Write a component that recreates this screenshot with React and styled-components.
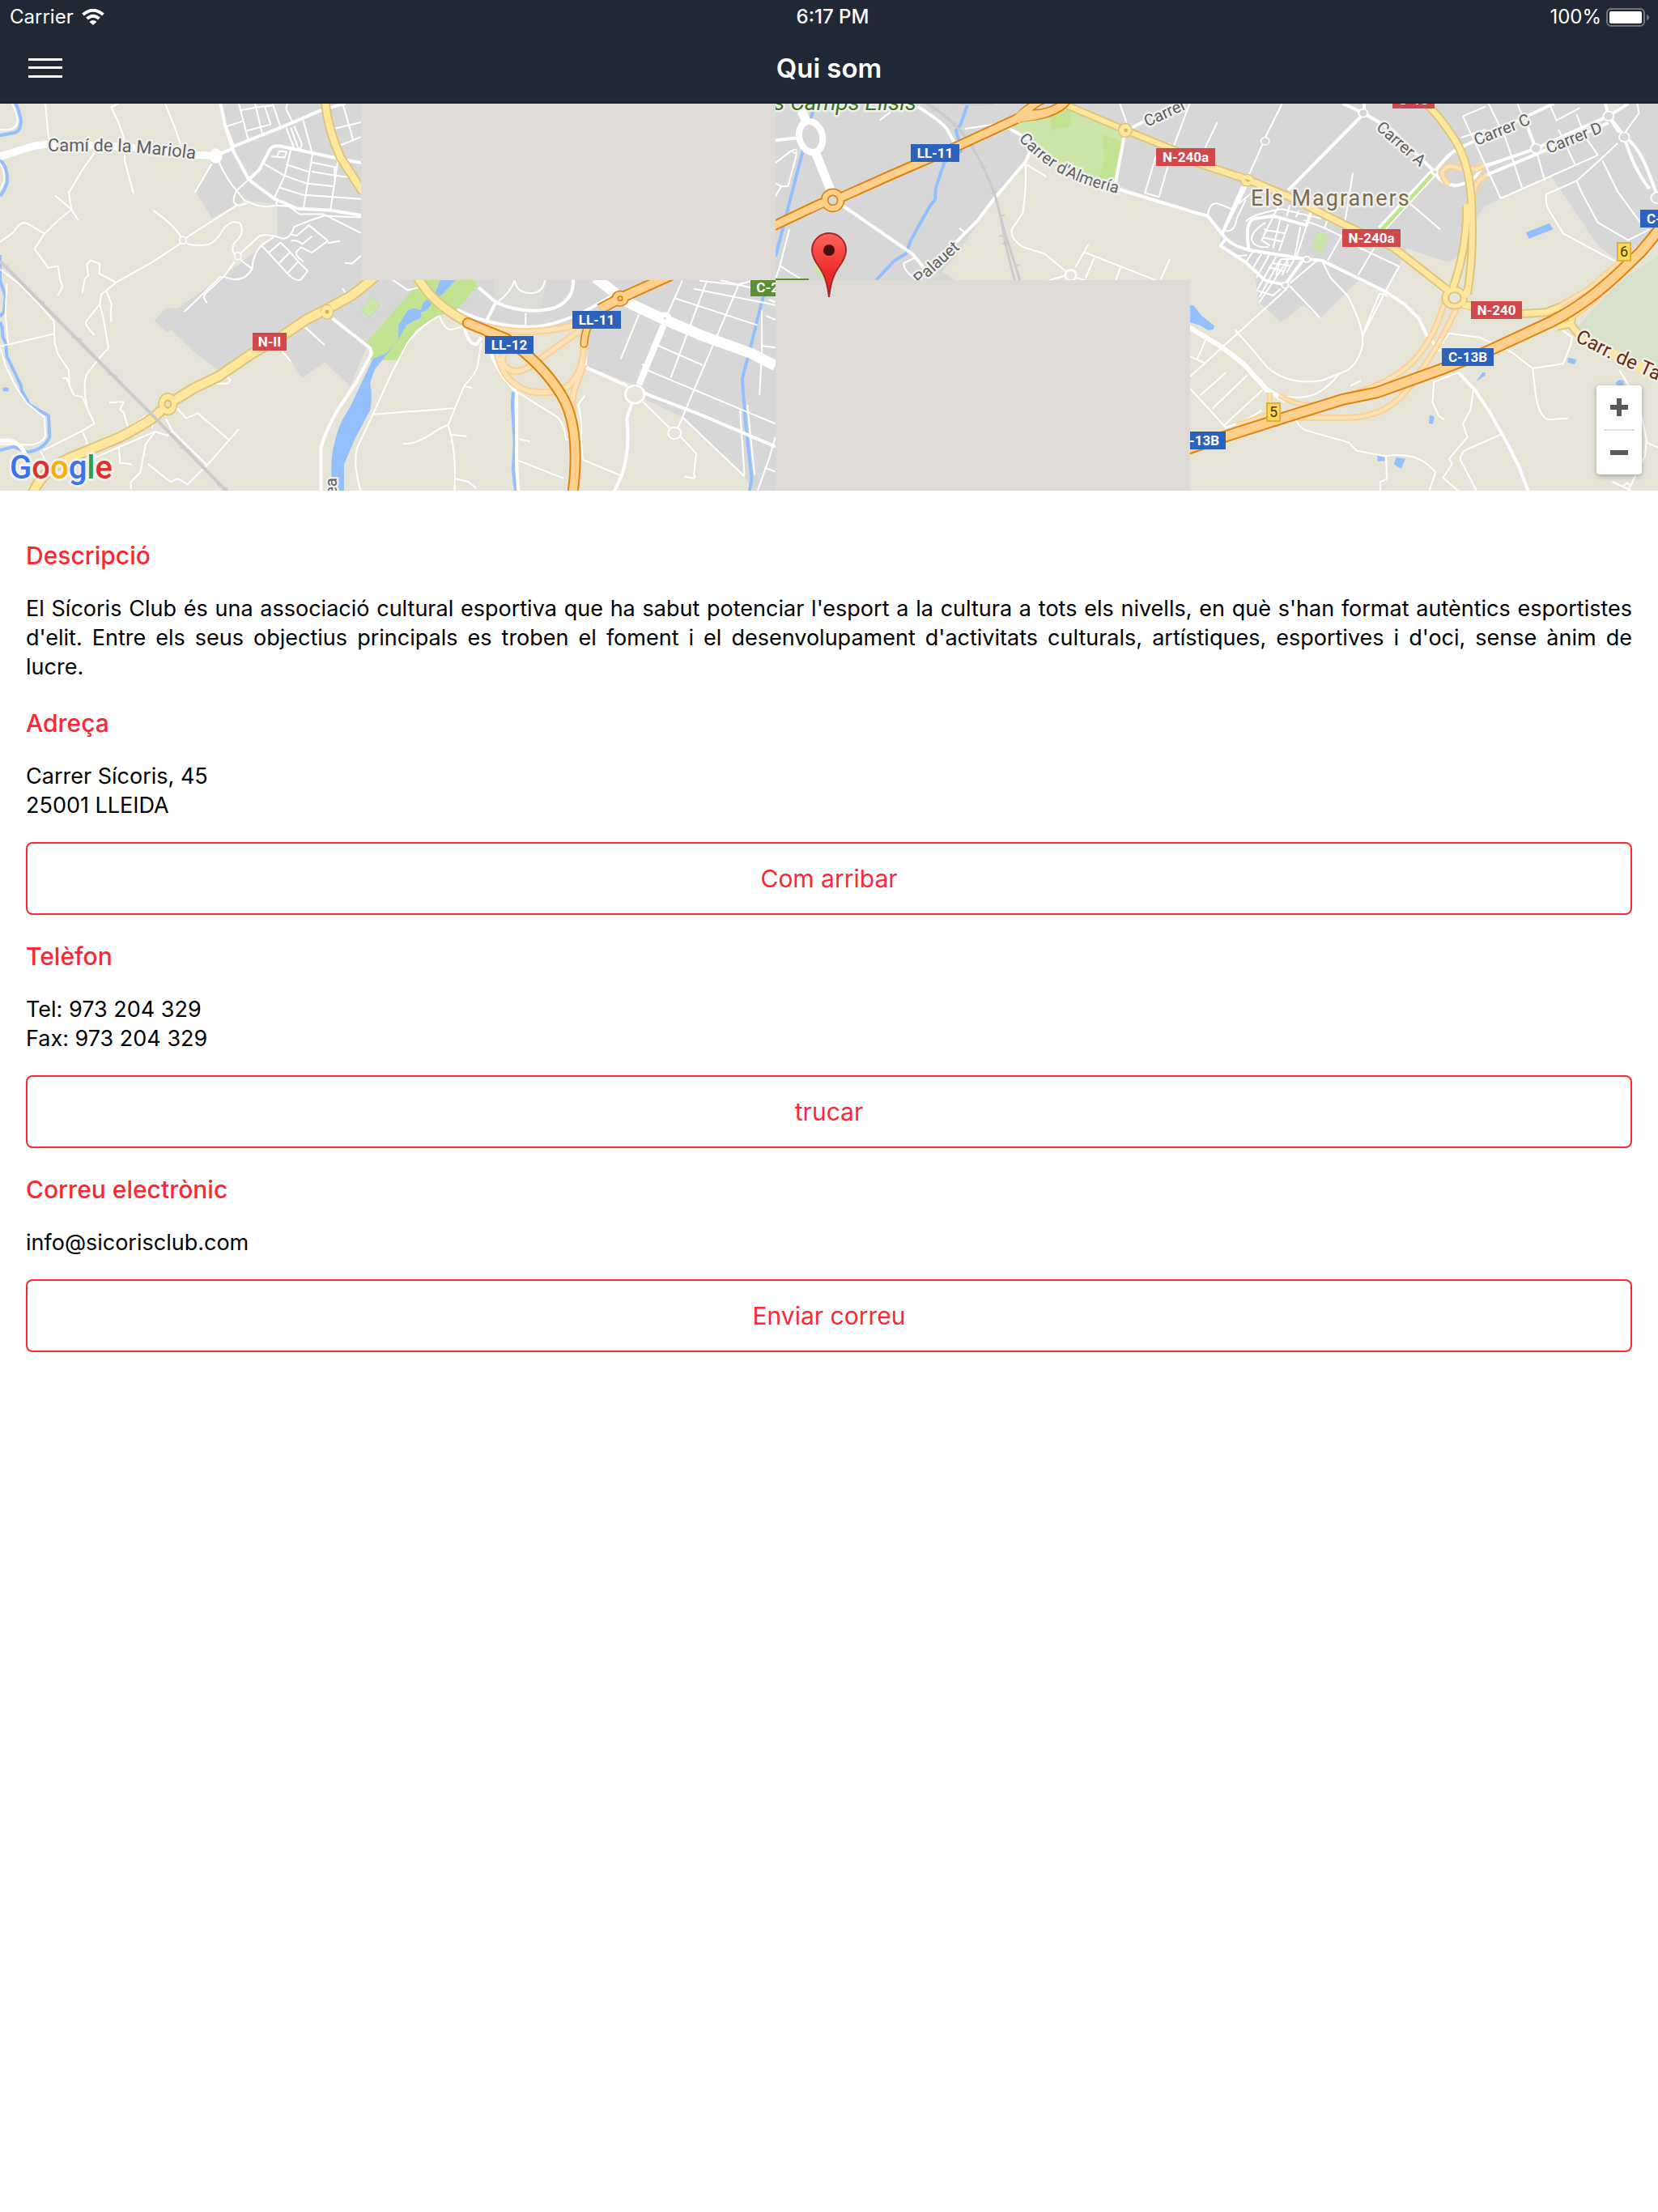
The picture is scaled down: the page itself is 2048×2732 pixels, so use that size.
import React from 'react'
import styled, { createGlobalStyle } from 'styled-components'

const GlobalStyle = createGlobalStyle`
  * {
    box-sizing: border-box;
  }
  body {
    margin: 0;
    background: #ffffff;
    color: #000000;
    font-family: Inter, "Liberation Sans", sans-serif;
  }`

const Header = styled.header`
  background-color: #1f2935;
  border-bottom: 2px solid #19212d;
  color: #ffffff;`

const StatusBar = styled.div`
  display: grid;
  grid-template-columns: 1fr auto 1fr;
  align-items: center;
  height: 42px;
  padding: 0 11px 0 12px;
  font-size: 24px;
  line-height: 40px;`

const StatusLeft = styled.div`
  display: flex;
  align-items: center;
  gap: 10px;`

const StatusTime = styled.div`
  padding-left: 8px;
  font-weight: 500;`

const StatusRight = styled.div`
  display: flex;
  align-items: center;
  justify-content: flex-end;
  gap: 6px;`

const NavBar = styled.div`
  display: grid;
  grid-template-columns: 1fr auto 1fr;
  align-items: center;
  height: 84px;
  padding: 0 32px;`

const MenuButton = styled.button`
  display: flex;
  justify-self: start;
  padding: 3px;
  border: 0;
  background: none;
  color: #ffffff;
  cursor: pointer;`

const Title = styled.h1`
  margin: 0;
  font-size: 33px;
  font-weight: 600;
  line-height: 40px;`

const MapBox = styled.section`
  position: relative;
  height: 478px;
  overflow: hidden;
  background-color: #dedbd6;`

const MapSvg = styled.svg`
  display: block;
  width: 100%;
  height: 100%;
  font-family: Roboto, "Liberation Sans", sans-serif;`

const ZoomControl = styled.div`
  position: absolute;
  right: 20px;
  bottom: 20px;
  display: flex;
  flex-direction: column;
  align-items: center;
  width: 56px;
  background-color: #ffffff;
  border-radius: 4px;
  box-shadow: 0 2px 6px rgba(0, 0, 0, 0.3);`

const ZoomButton = styled.button`
  display: flex;
  align-items: center;
  justify-content: center;
  width: 56px;
  height: 54px;
  padding: 0;
  border: 0;
  background: none;
  cursor: pointer;`

const ZoomDivider = styled.div`
  width: 38px;
  height: 2px;
  background-color: #e0e0e0;`

const Content = styled.main`
  padding: 62px 32px;`

const Section = styled.section`
  margin-bottom: 33px;`

const Heading = styled.h2`
  margin: 0 0 30px;
  color: #fc2733;
  font-size: 30px;
  font-weight: 500;
  line-height: 36px;`

const Text = styled.p`
  margin: 0;
  font-size: 27px;
  line-height: 36px;
  text-align: justify;`

const FullLines = styled.span`
  display: block;
  text-align-last: justify;`

const ActionButton = styled.button`
  display: block;
  width: 100%;
  height: 90px;
  margin-top: 27px;
  border: 2px solid #fc2733;
  border-radius: 8px;
  background-color: #ffffff;
  color: #fc2733;
  font-family: inherit;
  font-size: 30px;
  cursor: pointer;`

const Street = styled.path`
  fill: none;
  stroke: #ffffff;
  stroke-width: ${(p) => p.$w || 2}px;
  stroke-linejoin: round;
  vector-effect: non-scaling-stroke;`

const Line = styled.path`
  fill: none;
  stroke: ${(p) => p.$color};
  stroke-width: ${(p) => p.$w}px;
  stroke-linejoin: round;
  stroke-linecap: ${(p) => p.$cap || 'butt'};
  vector-effect: non-scaling-stroke;`

const MapLabel = styled.text`
  fill: ${(p) => p.$color || '#5f5f5f'};
  font-size: ${(p) => p.$size || 20}px;
  font-style: ${(p) => (p.$italic ? 'italic' : 'normal')};
  letter-spacing: ${(p) => (p.$tracked ? '2px' : 'normal')};
  stroke: #efefee;
  stroke-width: 5px;
  stroke-linejoin: round;
  paint-order: stroke;`

const ShieldText = styled.text`
  fill: #ffffff;
  font-size: 17px;
  font-weight: 700;
  text-anchor: middle;`

const ExitText = styled.text`
  fill: #4a3a10;
  font-size: 18px;
  text-anchor: middle;`

const Logo = styled.text`
  font-size: 40px;
  font-weight: 500;
  stroke: #f3f1ea;
  stroke-width: 6px;
  stroke-linejoin: round;
  paint-order: stroke;`

const URBAN = '#d7d7d7'
const LAND = '#e6e3d7'
const WATER = '#93bfff'
const PARK = '#c2e492'
const PITCH = '#cce6aa'
const RAIL = '#cbcbcb'

const ROADS = {
  yellow: { fill: '#ffe79d', casing: '#dfc57c' },
  orange: { fill: '#ffd08b', casing: '#dd850f' },
  ramp: { fill: '#fbe2b8', casing: '#fdd090' }
}

const SHIELDS = {
  red: '#d0484c',
  blue: '#2c62bb',
  green: '#5b9032'
}

function Streets({ paths, w }) {
  return paths.map((d) => <Street key={d} d={d} $w={w} />)
}

function Road({ d, w, kind }) {
  return (
    <>
      <Line d={d} $w={w + 3} $color={ROADS[kind].casing} />
      <Line d={d} $w={w - 1} $color={ROADS[kind].fill} />
    </>
  )
}

function Shield({ x, y, w, color, children }) {
  return (
    <g>
      <rect x={x} y={y} width={w} height="22" fill={SHIELDS[color]} />
      <ShieldText x={x + w / 2} y={y + 17}>{children}</ShieldText>
    </g>
  )
}

function Exit({ x, y, children }) {
  return (
    <g>
      <rect x={x + 1} y={y + 1} width="16" height="22" fill="#fdd853" stroke="#dcb03a" strokeWidth="2" />
      <ExitText x={x + 9} y={y + 18}>{children}</ExitText>
    </g>
  )
}

// West side: Mariola and the N-II
function WestTile() {
  return (
    <g transform="scale(0.3333 0.389)">
      <path fill={URBAN} d="M815 328 860 465 800 490 725 610 785 693 880 650 905 635 1027 650 1029 747 945 800 830 875 660 978 615 978 572 1018 617 1055 632 1045 735 1130 810 1175 930 1110 1050 1110 1119 1200 1204 1150 1298 1226 1355 1110 1600 890V328Z" />
      <path fill={PITCH} stroke="#c2e3a6" strokeWidth="6" d="M1340 984 1377 946 1406 971 1368 1008Z" />
      <Line $color={WATER} $w={4} d="M58 328Q75 360 78 385Q75 420 50 422L0 430M0 508Q30 530 26 580Q15 610 0 622M0 810V890L20 940 15 990 0 1005M0 1022 8 1040 10 1070 22 1090 25 1130 78 1225 80 1240 110 1285 180 1320 184 1388Q160 1430 100 1435L50 1418 0 1430" />
      <path fill={WATER} d="M10 1233 20 1229 33 1233 30 1243 12 1242Z" />
      <Streets
        paths={[
          'M45 328Q65 365 65 385Q60 410 30 412H0',
          'M0 520Q20 545 15 575L0 605',
          'M168 328 180 440',
          'M412 340 440 328M412 340 440 390 460 440 462 510 495 615',
          'M612 328 650 410 672 465',
          'M350 485 305 540 255 612 265 665 215 700 165 742 128 790 178 850 215 845 222 885 232 910 215 938',
          'M203 620 265 665 290 700',
          'M0 768 50 738Q75 700 100 709L165 742',
          'M305 930 315 885 327 875 322 840 335 826 370 838 367 868 430 897 565 832 670 772',
          'M430 897 375 935 370 965 320 1020Q310 1030 350 1063M370 965 385 1020 402 1105 365 1140 320 1190Q305 1230 325 1300L350 1345 300 1370 160 1430',
          'M395 925 413 965 410 1000 413 1022',
          'M0 855 70 900 150 970 200 1020 203 1090 215 1125 255 1175 258 1225 275 1255 305 1260 325 1300M232 1200 248 1202 258 1225',
          'M25 900 20 1000 30 1095M0 1100 100 1080 200 1060M0 1100 20 1160 60 1230 100 1280 165 1325 168 1385Q150 1415 90 1412L0 1410',
          'M568 668Q640 710 672 752M690 755 880 650',
          'M692 772Q705 782 770 777Q800 770 830 725Q860 695 890 710Q910 740 870 770Q850 800 880 812',
          'M890 805 960 750Q990 740 1050 758Q1080 755 1090 720L1150 700 1200 685 1338 690',
          'M683 990 815 880 830 878 870 830M767 962 755 945 758 935 830 878Q900 905 935 853L890 825M935 853Q935 810 970 778L1015 752',
          'M722 612 785 520M812 515Q840 570 877 605L922 570M877 605Q850 650 890 652L915 645M877 605 905 635Q970 665 1020 652',
          'M405 1278 458 1276 445 1300 458 1310 475 1358M440 1420 445 1470 483 1473 488 1478',
          'M800 1218 845 1218 852 1208 840 1190M565 1360V1335M475 1360 540 1320',
          'M655 1295 690 1328 733 1312 848 1396M885 1362 770 1475 695 1538 660 1520 632 1530 548 1473M615 1330 640 1370 765 1475M640 1370 620 1383 575 1370 540 1410 520 1500 485 1530V1552',
          'M575 1370 440 1420 200 1510M150 1432 170 1465M305 1370 322 1400V1415L220 1460',
          'M1120 1030 1203 1096M1040 1110 1077 1147M1270 915 1281 932M480 1360 520 1340',
          'M838 402 898 385M890 350 958 340 1010 335M885 328 920 445M945 328 972 425M982 340 1003 395 915 415M1010 328 1040 405M1060 345 1085 390M1060 345 1065 330',
          'M1123 380 1158 490M1060 405 1090 470M1078 405 1105 470Q1118 475 1118 455L1090 400M1240 408 1338 388M1270 328 1308 442M1258 462 1338 435',
          'M1005 497 1055 500 1062 482 1035 480 1025 500M975 518 1055 558 1135 582 1240 592M1060 522 1150 547M1078 475 1055 558 1015 630M1158 490 1125 660M1252 512 1225 665M1152 515 1250 532M1155 545 1250 558 1315 565M1240 532 1240 570M1035 595 1120 618 1338 632',
          'M1025 635V652L1070 655 1110 680 1200 680 1338 740M1080 745 1100 748 1145 715 1215 765 1155 802 1115 785 1098 800Q1095 815 1125 830M1078 765Q1100 760 1120 775L1157 750M1215 772 1260 765',
          'M970 780 1065 868 1105 830M995 803 1040 770 1075 800 1032 838M1105 830 1140 860 1115 888Q1095 895 1065 868M1075 800 1105 830M1278 835 1305 837 1338 812'
        ]}
      />
      <Streets
        w={4}
        paths={[
          'M817 328 835 400 865 465 1040 405 1190 350 1280 328M835 400 865 480 922 570 1015 630 1100 662 1230 668 1338 684',
          'M922 570 960 540 1000 475Q1010 460 1040 464L1100 475 1250 503 1338 517M800 495 865 470'
        ]}
      />
      <Street $w={9} d="M0 497 120 465Q150 458 190 458L450 465 600 478 730 492 800 495" />
      <circle cx="800" cy="495" r="24" fill="#ffffff" />
      <circle cx="678" cy="763" r="12" fill={LAND} stroke="#ffffff" strokeWidth="5" />
      <circle cx="881" cy="813" r="12" fill={LAND} stroke="#ffffff" strokeWidth="5" />
      <Street $w={5} d="M0 1400Q70 1390 95 1445" />
      <Road kind="yellow" w={9} d="M1205 322Q1215 410 1262 500L1345 610" />
      <Road kind="yellow" w={11} d="M120 1570Q150 1500 250 1457L440 1390Q520 1355 570 1325L620 1285 720 1232 810 1195 930 1125 1040 1070 1140 1012 1215 980 1300 940Q1350 910 1400 870" />
      <circle cx="622" cy="1283" r="34" fill="#ffe79d" stroke="#dfc57c" strokeWidth="5" />
      <circle cx="622" cy="1283" r="12" fill="#eadfae" stroke="#dfb964" strokeWidth="5" />
      <circle cx="1212" cy="990" r="23" fill="#ffe79d" stroke="#dfc57c" strokeWidth="4" />
      <circle cx="1212" cy="990" r="7" fill="#d9b45d" />
      <Line $color="#ffe79d" $w={8} d="M560 1331 600 1302M648 1270 720 1232M1150 1007 1190 991M1228 975 1290 945" />
      <Line $color={RAIL} $w={4} d="M0 828 145 955 410 1185 550 1305 680 1420 840 1560" />
      <Line $color={RAIL} $w={2} d="M12 850 30 842M135 950 165 962M265 1070 302 1078M400 1188 435 1195M538 1303 565 1308M668 1420 702 1432M805 1538 845 1552" />
    </g>
  )
}

// River, LL-12 interchange and the streets to the east of it
function RiverTile() {
  return (
    <g transform="translate(400 340) scale(0.3571 0.3333)">
      <path fill={URBAN} d="M520 0H1570V800H1485L1455 745 1240 525 1110 460 1070 405 905 335 900 260 860 190 570 195 460 130Z" />
      <path fill="#dcddd6" d="M590 0H780L745 130Q650 140 590 100Z" />
      <path fill={PARK} d="M310 50 350 10H525L530 40 460 130 400 150 320 200 262 314H160L165 270 150 245Z" />
      <path fill={WATER} d="M410 0H470L420 60 370 110Q350 140 335 135Q345 160 320 165L285 185 260 235 220 290 175 350 160 400Q170 450 160 500L110 600 70 700V800H30Q20 690 35 630Q50 550 90 490L130 400 170 310 215 290 258 240V185L290 130Q310 115 335 130L345 100 383 70Z" />
      <Line $color={WATER} $w={4} d="M655 432 652 480 660 620 655 720 664 800M1522 70Q1500 160 1480 250L1447 385 1460 560 1480 750 1473 800" />
      <Streets
        paths={[
          'M215 0 290 55 350 40M400 150Q420 210 445 200L480 190M400 150Q330 190 290 250L240 350 170 515 115 640Q100 700 128 800',
          'M170 515 452 493M485 410 513 418M545 250 533 330Q530 360 485 410L430 555Q460 650 452 800M430 555Q400 565 370 590Q320 625 273 625M435 590 495 596M452 753 500 765 527 790',
          'M665 430Q740 480 800 520Q830 540 838 608H890M675 607 713 616M670 685 828 752M903 445 880 480Q895 540 890 600L895 683 1030 743',
          'M1105 470 1200 570M1232 595 1288 660 1280 740Q1295 760 1247 745',
          'M1090 145 1027 310M1155 260 1310 333M1115 350 1562 550M1230 190 1562 320M1215 85 1500 185M1280 50 1562 110M1370 17 1562 70M1435 35 1225 565M1240 20 1190 140M1325 20 1200 380M1300 20 1430 35 1480 20M1100 330 1110 335',
          'M1515 130V290L1507 443M1562 100 1540 90M1530 150 1562 165M1518 262 1562 268M1525 712 1562 728M1500 800 1540 680 1562 600M1440 500 1455 740M1240 525 1455 745M1465 480 1490 740',
          'M660 17Q650 60 600 100M698 140V190M660 17Q665 65 715 66Q760 65 765 17'
        ]}
      />
      <Streets
        w={4}
        paths={[
          'M535 45 595 100 560 175M595 100Q700 150 800 120Q865 90 863 17M460 128Q600 200 740 190Q850 175 990 80M485 190Q500 260 530 255L545 230M665 430Q600 360 575 280',
          'M667 430V620Q665 700 673 800M905 260V340L1050 410M1065 475 1048 530Q1060 650 1030 743L1005 800M1110 438 1300 515 1562 635M-10 800V640Q10 560 60 480L110 400 165 290 160 270 30 160'
        ]}
      />
      <Street $w={13} d="M940 10 1050 100 1180 165 1300 220 1480 290 1562 335" />
      <Street $w={8} d="M1175 185 1090 405" />
      <circle cx="1180" cy="160" r="14" fill="#d7d7d7" stroke="#ffffff" strokeWidth="20" />
      <circle cx="1076" cy="441" r="33" fill={LAND} stroke="#ffffff" strokeWidth="8" />
      <circle cx="1213" cy="585" r="22" fill={LAND} stroke="#ffffff" strokeWidth="6" />
      <Road kind="ramp" w={6} d="M560 190Q700 230 870 185M885 205 735 320Q670 380 630 340Q605 310 630 280M600 290Q620 400 710 430Q830 450 870 380Q900 330 898 260M898 330 865 430Q855 470 862 510" />
      <Road kind="yellow" w={10} d="M315 -10Q350 60 400 105T500 175" />
      <Line $color={ROADS.orange.casing} $w={14} $cap="round" d="M498 177 630 235Q750 320 820 440" />
      <Road kind="orange" w={11} d="M560 205 630 235Q750 320 820 440T862 800" />
      <Line $color={ROADS.orange.casing} $w={10} $cap="round" d="M900 254Q903 200 925 170" />
      <Line $color={ROADS.orange.fill} $w={7} $cap="round" d="M900 254Q903 200 925 170" />
      <Line $color={ROADS.orange.fill} $w={10} $cap="round" d="M498 177 630 235" />
      <Road kind="orange" w={11} d="M955 125 1025 85 1200 0" />
      <circle cx="1025" cy="86" r="28" fill="#ffd08b" stroke="#dd850f" strokeWidth="5" />
      <Line $color={ROADS.orange.fill} $w={10} d="M970 117 1020 88 1090 53" />
      <circle cx="1025" cy="86" r="8" fill="#e6c48a" stroke="#dd850f" strokeWidth="5" />
    </g>
  )
}

// Camps Elisis and Carrer d'Almeria
function CentreTile() {
  return (
    <g transform="translate(950 120) scale(0.3333)">
      <path fill={URBAN} d="M0 0H1570V700H0Z" />
      <path fill={LAND} d="M968 200 1285 325 1570 425V700H720L640 645 690 590 835 375 950 250Z" />
      <path fill={PITCH} d="M900 110 1080 30 1320 130 1285 325 1120 290 960 150Z" />
      <path fill={PARK} d="M1040 60 1110 45 1125 105 1048 122ZM1237 138 1315 165 1283 318 1222 298 1242 235Z" />
      <path fill={PITCH} d="M163 640 185 622 235 690H215Z" />
      <Line $color={WATER} $w={4} d="M170 20 125 200 65 430 24 590M738 20 710 100 693 125 700 150 712 200 650 240 618 335 615 380 595 405 525 530 508 580 465 605 395 680" />
      <Streets
        paths={[
          'M22 245 80 200Q105 190 100 220L70 330 45 330 25 320M45 330 22 370M75 490 40 625 25 670M40 625 115 672',
          'M410 85 450 55M725 118 840 100M705 485 728 505M540 595 500 615Q495 635 530 665',
          'M950 250Q955 330 940 430L900 490Q890 520 940 555L1020 580 1100 645M955 250 1028 295',
          'M1135 630 1183 547M1165 573 1450 685M1205 595 1173 670M1302 632 1285 678M1485 600 1452 675M1035 680 1100 660M1140 670 1210 690',
          'M1300 24 1325 95M1435 215 1393 355 1445 370 1500 180 1560 20M1480 170 1510 190'
        ]}
      />
      <Streets w={4} paths={['M550 35Q640 90 660 120L685 165M270 400 530 580 600 665M970 195 950 240 835 375 770 460 660 570M880 110 960 155M1315 150 1283 320M1290 340 1570 425M1340 115 1400 85M22 160 110 150']} />
      <Street $w={11} d="M120 50 140 95M172 205 230 350" />
      <ellipse cx="155" cy="147" rx="43" ry="58" fill={URBAN} stroke="#ffffff" strokeWidth="24" transform="rotate(-15 155 147)" />
      <circle cx="1118" cy="660" r="20" fill={LAND} stroke="#ffffff" strokeWidth="8" />
      <circle cx="95" cy="200" r="7" fill={URBAN} stroke="#ffffff" strokeWidth="4" />
      <Road kind="yellow" w={7} d="M1080 20 1320 122 1500 195 1660 265" />
      <circle cx="1320" cy="123" r="25" fill="#ffe79d" stroke="#dfc57c" strokeWidth="5" />
      <circle cx="1322" cy="123" r="7" fill="#d9b45d" />
      <Line $color={RAIL} $w={3} d="M560 10Q690 80 750 180Q800 260 838 365L870 490 930 680M860 450 875 540 910 680" />
      <Line $color={RAIL} $w={2} d="M680 20Q760 35 830 24M605 52 625 40M680 105 697 95M742 185 762 178M788 262 808 258M825 358 842 352M855 440 873 438M852 515 872 513M865 543 885 541M908 625 928 622" />
      <Road kind="orange" w={10} d="M0 485 190 395 270 370 460 285 680 190 940 70 1060 20" />
      <path fill="none" stroke="#dd850f" strokeWidth="44" d="M930 80Q960 40 1020 15M950 68Q1060 60 1100 10" />
      <path fill="none" stroke="#ffd08b" strokeWidth="33" d="M915 87Q960 40 1020 15M930 75Q1060 60 1100 10" />
      <path fill={URBAN} stroke="#dd850f" strokeWidth="5" d="M980 47Q1005 25 1050 12L1075 18Q1030 48 980 47Z" />
      <circle cx="236" cy="382" r="42" fill="#ffd08b" stroke="#dd850f" strokeWidth="5" />
      <Line $color={ROADS.orange.fill} $w={9} d="M150 415 205 390M265 372 330 343" />
      <circle cx="236" cy="382" r="18" fill={URBAN} stroke="#dd850f" strokeWidth="5" />
    </g>
  )
}

// Els Magraners and the C-13B
function EastTile() {
  return (
    <g transform="translate(1460 120) scale(0.375 0.3333)">
      <path fill={URBAN} d="M20 0H1570V1470H20Z" />
      <path fill={LAND} d="M20 420 85 440 130 510 125 550 235 630 255 760 325 833 400 770 455 818 580 680 670 720 715 627 740 560 880 612 940 560 965 460 995 405 1215 290 1370 550 1440 610 1570 480V1470H20Z" />
      <path fill="#d6e0cb" d="M1568 590V1030L1330 890 1305 850 1400 730 1470 660Z" />
      <path fill="#e6e3d7" d="M1395 20H1450L1415 60Z" />
      <path fill={WATER} d="M27 770H37L65 810 105 845Q110 865 85 863L60 845 27 835ZM1133 502 1210 467 1222 490 1143 524ZM1272 965 1300 972 1293 990 1270 983ZM970 1053 990 1020 1000 1020 998 1032ZM1428 1058 1440 1047 1455 1050V1075H1435ZM817 1177 832 1185 826 1212 813 1208ZM643 1328 668 1335V1347L645 1350ZM706 1335 736 1340 722 1377 698 1360Z" />
      <path fill={PITCH} stroke="#c2e3a6" strokeWidth="3" d="M447 500 482 514 462 573 428 560Z" />
      <Line $color="#ffffff" $w={10} d="M828 280 655 490" />
      <Line $color={PARK} $w={5} d="M824 287 657 492" />
      <Streets
        paths={[
          'M330 24 274 150M265 175 220 290M75 190 117 92M563 280 537 460M752 395 850 490M27 24 0 90',
          'M145 495Q175 500 180 450L210 380M85 440Q90 385 120 395L165 415M165 415 235 350M210 460Q240 430 330 415L460 450M275 465Q225 500 230 530Q240 560 285 555M300 445 262 530 290 550M325 445 300 560M350 470 320 570M390 480 370 600M425 425 375 600M270 490 340 505M265 520 330 535M300 440 325 395M345 440 355 400M375 445 385 420M400 455 470 485 525 515 480 605M470 485 480 450',
          'M172 590 215 585M235 630 265 575M245 670 290 580M250 710 310 590M255 740 325 600M255 760 350 600M210 612 235 570M245 715 300 735 325 710M325 600 420 600M285 630 335 645M300 615 355 625M325 600 310 660M350 610 330 660M370 600 345 650',
          'M560 545 715 627 670 720 595 885V920Q580 990 540 1015L460 1050Q350 1070 280 1000Q230 930 175 862M635 555 580 660M650 730Q670 725 675 740M650 730 595 880M460 605 490 670 545 735Q590 830 595 890M355 700 455 818M445 605 355 690M345 710 27 1035M175 862 185 880',
          'M50 970 80 895M25 960 75 985M27 1080 145 1225M60 1105 145 1020M100 1155 215 1030M140 1215 265 1085M145 1225Q230 1190 262 1160M330 1108Q400 1120 440 1100Q490 1070 520 1020',
          'M1050 375 925 70M925 70 1000 35M1010 24 1065 150M1105 24 1125 80M1065 150 1120 335M1210 24 1235 90M1165 190 1195 310M1240 120 1295 250M1300 65 1330 150 1370 215M1000 250 1110 215M1050 375 1370 215M920 150 1000 120M1235 85 1310 40',
          'M1435 170Q1380 230 1300 310L1200 360Q1195 400 1215 430L1255 505 1430 610M1300 310 1315 350 1370 465 1470 530 1540 490M1385 235 1435 350 1520 480M1500 24 1505 60 1460 130',
          'M845 930 880 875 980 890 1080 940 1155 1005 1255 988 1280 920 1285 890 1250 860M1155 1005 1165 1100Q1175 1180 1205 1195L1272 1190M910 1020 830 1055 825 1130 845 1180 865 1195',
          'M960 1085 950 1160 925 1210 940 1260 880 1340 890 1360 860 1410 910 1460M1050 1250 930 1310Q910 1340 920 1350L970 1458M375 1190Q380 1220 410 1235L550 1280 575 1310 670 1330Q780 1310 835 1390L815 1458M672 1330 675 1415 653 1425V1458',
          'M1440 1010 1475 1075 1510 1160 1530 1270 1525 1330 1470 1458M1530 1280 1568 1298M1417 1425 1480 1458M1450 1445 1465 1430 1480 1440M555 1070 590 1050'
        ]}
      />
      <Streets
        w={4}
        paths={[
          'M530 24 600 60 690 120 833 277M600 24V60L350 345M833 277Q850 320 900 328Q950 320 970 290L990 260 1165 190 1405 70 1470 24M833 277Q880 200 930 180L1225 24M1000 290 1180 205 1405 95M1395 24 1405 70 1460 148Q1500 180 1530 260L1568 370M1405 70 1440 130M1460 160Q1490 270 1540 340',
          'M210 330 130 510M200 330 135 500M0 415 85 440 145 525Q180 560 240 570L410 600 460 605 670 720 735 770 780 820 805 880 850 940M910 1020 965 1085 1015 1170 1070 1280 1110 1370 1140 1458',
          'M145 525 127 550 210 612 275 680 340 695 400 600M220 565Q205 460 240 450L300 440 410 475 425 425M1130 85 1165 190'
        ]}
      />
      <Street $w={6} d="M20 850 130 925 200 985 280 1085 340 1125" />
      <circle cx="597" cy="59" r="15" fill={URBAN} stroke="#ffffff" strokeWidth="5" />
      <circle cx="274" cy="163" r="14" fill={URBAN} stroke="#ffffff" strokeWidth="4" />
      <circle cx="833" cy="277" r="9" fill={URBAN} stroke="#ffffff" strokeWidth="5" />
      <circle cx="1166" cy="190" r="17" fill={URBAN} stroke="#ffffff" strokeWidth="5" />
      <circle cx="1405" cy="70" r="17" fill={URBAN} stroke="#ffffff" strokeWidth="5" />
      <circle cx="1457" cy="148" r="17" fill={URBAN} stroke="#ffffff" strokeWidth="5" />
      <circle cx="1565" cy="373" r="20" fill={URBAN} stroke="#ffffff" strokeWidth="5" />
      <circle cx="411" cy="601" r="11" fill={URBAN} stroke="#ffffff" strokeWidth="5" />
      <circle cx="340" cy="697" r="11" fill={URBAN} stroke="#ffffff" strokeWidth="5" />
      <Road kind="ramp" w={5} d="M925 230Q950 290 995 252M920 270Q880 240 858 275Q855 300 880 325M1005 288Q965 310 960 360L955 460" />
      <Road kind="ramp" w={5} d="M865 760Q830 900 760 980Q690 1060 560 1100M905 780Q850 920 770 1040Q690 1190 540 1188H380" />
      <Road kind="ramp" w={4} d="M290 1095V1140M320 1105Q390 1150 440 1140M180 1215 330 1160" />
      <Road kind="ramp" w={4} d="M1240 775 1340 710 1440 610M1280 820Q1350 770 1400 705" />
      <Road kind="yellow" w={8} d="M0 225 215 305 345 365 540 475 700 560 870 710" />
      <circle cx="215" cy="308" r="22" fill="#ffe79d" stroke="#dfc57c" strokeWidth="4" />
      <Line $color="#ffe79d" $w={7} d="M180 290 260 325" />
      <path fill="#d9b45d" d="M205 303 228 308 216 314Z" />
      <Road kind="yellow" w={8} d="M890 715Q940 560 938 400M940 730Q960 590 955 440Q955 260 900 160Q850 70 795 15" />
      <Line $color={ROADS.yellow.fill} $w={7} d="M939 460 938 395M954 420Q953 260 900 160" />
      <Road kind="yellow" w={8} d="M920 765 990 785 1110 803 1200 797 1250 775M1235 850 1280 840 1300 870 1340 915M1285 815 1280 840" />
      <circle cx="898" cy="744" r="41" fill="#ffe79d" stroke="#dfc57c" strokeWidth="5" />
      <Line $color="#ffe79d" $w={7} d="M845 690 875 715M925 770 970 782M890 722 897 690M932 740 944 700" />
      <circle cx="898" cy="744" r="21" fill={LAND} stroke="#dfc06e" strokeWidth="5" />
      <Line $color="#ffe79d" $w={12} d="M1325 900 1568 1035" />
      <Road kind="orange" w={12} d="M0 1310 140 1258 330 1190 530 1120 640 1095 850 1010 1000 945 1220 830Q1340 760 1450 640L1510 575Q1560 510 1600 450" />
    </g>
  )
}

function Pin() {
  return (
    <g>
      <path fill="url(#pin)" stroke="#a52726" strokeWidth="2" d="M1024 367C1021 340 1014 333 1008 324C1004 317 1003 313 1003 309A21 21 0 0 1 1045 309C1045 313 1044 317 1040 324C1034 333 1027 340 1024 367Z" />
      <circle cx="1024" cy="309" r="7" fill="#4b0d0d" />
    </g>
  )
}

function ClubMap() {
  return (
    <MapBox aria-label="Mapa">
      <MapSvg viewBox="0 128 2048 478" preserveAspectRatio="xMidYMid slice">
        <defs>
          <linearGradient id="pin" x1="0" y1="0" x2="0" y2="1">
            <stop offset="0" stopColor="#fc635d" />
            <stop offset="0.6" stopColor="#ee2d2c" />
            <stop offset="1" stopColor="#d51f1f" />
          </linearGradient>
          <clipPath id="west"><path d="M0 128H446V346H958V606H0Z" /></clipPath>
          <clipPath id="centre"><path d="M958 128H1470V346H958Z" /></clipPath>
          <clipPath id="east"><path d="M1470 128H2048V606H1470Z" /></clipPath>
          <clipPath id="loaded"><path d="M0 128H446V346H958V128H2048V606H1470V346H958V606H0Z" /></clipPath>
          <path id="mariola" d="M59 187H130Q170 187 245 197" />
          <path id="almeria" d="M1258 172Q1290 206 1322 220T1400 243" />
          <path id="tarragona" d="M1945 421 2000 449 2070 480" />
        </defs>

        <g clipPath="url(#west)">
          <rect y="128" width="958" height="478" fill={LAND} />
          <WestTile />
          <RiverTile />
        </g>
        <g clipPath="url(#centre)"><CentreTile /></g>
        <g clipPath="url(#east)"><EastTile /></g>

        <g clipPath="url(#loaded)">
          <MapLabel $size={22}><textPath href="#mariola">Camí de la Mariola</textPath></MapLabel>
          <MapLabel $size={20} textAnchor="end" transform="translate(416 590) rotate(-90)">ea</MapLabel>
          <MapLabel $size={28} $italic $color="#38761d" x="1132" y="136" textAnchor="end">s Camps Elísis</MapLabel>
          <MapLabel transform="translate(1136 352) rotate(-42)">Palauet</MapLabel>
          <MapLabel><textPath href="#almeria">Carrer d'Almería</textPath></MapLabel>
          <MapLabel transform="translate(1417 157) rotate(-25)">Carrer</MapLabel>
          <MapLabel transform="translate(1699 159) rotate(41)">Carrer A</MapLabel>
          <MapLabel transform="translate(1824 180) rotate(-22)">Carrer C</MapLabel>
          <MapLabel transform="translate(1913 190) rotate(-22)">Carrer D</MapLabel>
          <MapLabel $size={27} $tracked $color="#7c6c4b" x="1545" y="254">Els Magraners</MapLabel>
          <MapLabel $size={24} $color="#662b06"><textPath href="#tarragona">Carr. de Ta</textPath></MapLabel>
          <Shield x={312} y={411} w={42} color="red">N-II</Shield>
          <Shield x={599} y={415} w={60} color="blue">LL-12</Shield>
          <Shield x={707} y={384} w={60} color="blue">LL-11</Shield>
          <Shield x={927} y={344} w={52} color="green">C-25</Shield>
          <rect x="958" y="344" width="41" height="2" fill={SHIELDS.green} />
          <Shield x={1125} y={178} w={60} color="blue">LL-11</Shield>
          <Shield x={1428} y={183} w={73} color="red">N-240a</Shield>
          <Shield x={1720} y={112} w={52} color="red">C-13</Shield>
          <Shield x={1658} y={283} w={72} color="red">N-240a</Shield>
          <Shield x={1817} y={372} w={63} color="red">N-240</Shield>
          <Shield x={1781} y={430} w={64} color="blue">C-13B</Shield>
          <Shield x={1450} y={533} w={64} color="blue">C-13B</Shield>
          <Shield x={2026} y={259} w={64} color="blue">C-13B</Shield>
          <Exit x={1564} y={497}>5</Exit>
          <Exit x={1997} y={299}>6</Exit>
        </g>
        <Logo x="12" y="591">
          <tspan fill="#3a73f0">G</tspan>
          <tspan fill="#e0302b">o</tspan>
          <tspan fill="#f7ae09">o</tspan>
          <tspan fill="#3a73f0">g</tspan>
          <tspan fill="#2f9e45">l</tspan>
          <tspan fill="#e0302b">e</tspan>
        </Logo>
        <Pin />
      </MapSvg>
      <ZoomControl>
        <ZoomButton type="button" aria-label="Apropar">
          <svg width="22" height="22"><path d="M8 0h6v8h8v6h-8v8H8v-8H0V8h8z" fill="#585858" /></svg>
        </ZoomButton>
        <ZoomDivider />
        <ZoomButton type="button" aria-label="Allunyar">
          <svg width="22" height="6"><path d="M0 0h22v6H0z" fill="#585858" /></svg>
        </ZoomButton>
      </ZoomControl>
    </MapBox>
  )
}

function WifiIcon() {
  return (
    <svg width="28" height="20" viewBox="0 0 28 20" fill="none" stroke="#ffffff">
      <path d="M1.500 7Q14 -3.500 26.500 7" strokeWidth="4" />
      <path d="M6.500 12Q14 5.500 21.500 12" strokeWidth="4" />
      <path d="M9.500 16Q14 12 18.500 16L14 20Z" fill="#ffffff" stroke="none" />
    </svg>
  )
}

function BatteryIcon() {
  return (
    <svg width="53" height="23" viewBox="0 0 53 23">
      <rect x="1" y="1" width="46" height="21" rx="5" fill="none" stroke="#6f767f" strokeWidth="2" />
      <rect x="4" y="4" width="40" height="15" rx="2" fill="#ffffff" />
      <path d="M50 8q3 1 3 3.500t-3 3.500z" fill="#6f767f" />
    </svg>
  )
}

export default function App() {
  return (
    <>
      <GlobalStyle />
      <Header>
        <StatusBar>
          <StatusLeft>Carrier <WifiIcon /></StatusLeft>
          <StatusTime>6:17 PM</StatusTime>
          <StatusRight>100% <BatteryIcon /></StatusRight>
        </StatusBar>
        <NavBar>
          <MenuButton type="button" aria-label="Menú">
            <svg width="42" height="26" viewBox="0 0 42 26">
              <path d="M0 2.500h42M0 12.500h42M0 23.500h42" stroke="currentColor" strokeWidth="3" />
            </svg>
          </MenuButton>
          <Title>Qui som</Title>
        </NavBar>
      </Header>
      <ClubMap />
      <Content>
        <Section>
          <Heading>Descripció</Heading>
          <Text>
            <FullLines>
              El Sícoris Club és una associació cultural esportiva que ha sabut potenciar l'esport a la cultura a tots els nivells, en què s'han format autèntics esportistes d'elit. Entre els seus objectius principals es troben el foment i el desenvolupament d'activitats culturals, artístiques, esportives i d'oci, sense ànim de
            </FullLines>
            {' '}lucre.
          </Text>
        </Section>
        <Section>
          <Heading>Adreça</Heading>
          <Text>Carrer Sícoris, 45<br />25001 LLEIDA</Text>
          <ActionButton type="button">Com arribar</ActionButton>
        </Section>
        <Section>
          <Heading>Telèfon</Heading>
          <Text>Tel: 973 204 329<br />Fax: 973 204 329</Text>
          <ActionButton type="button">trucar</ActionButton>
        </Section>
        <Section>
          <Heading>Correu electrònic</Heading>
          <Text>info@sicorisclub.com</Text>
          <ActionButton type="button">Enviar correu</ActionButton>
        </Section>
      </Content>
    </>
  )
}
